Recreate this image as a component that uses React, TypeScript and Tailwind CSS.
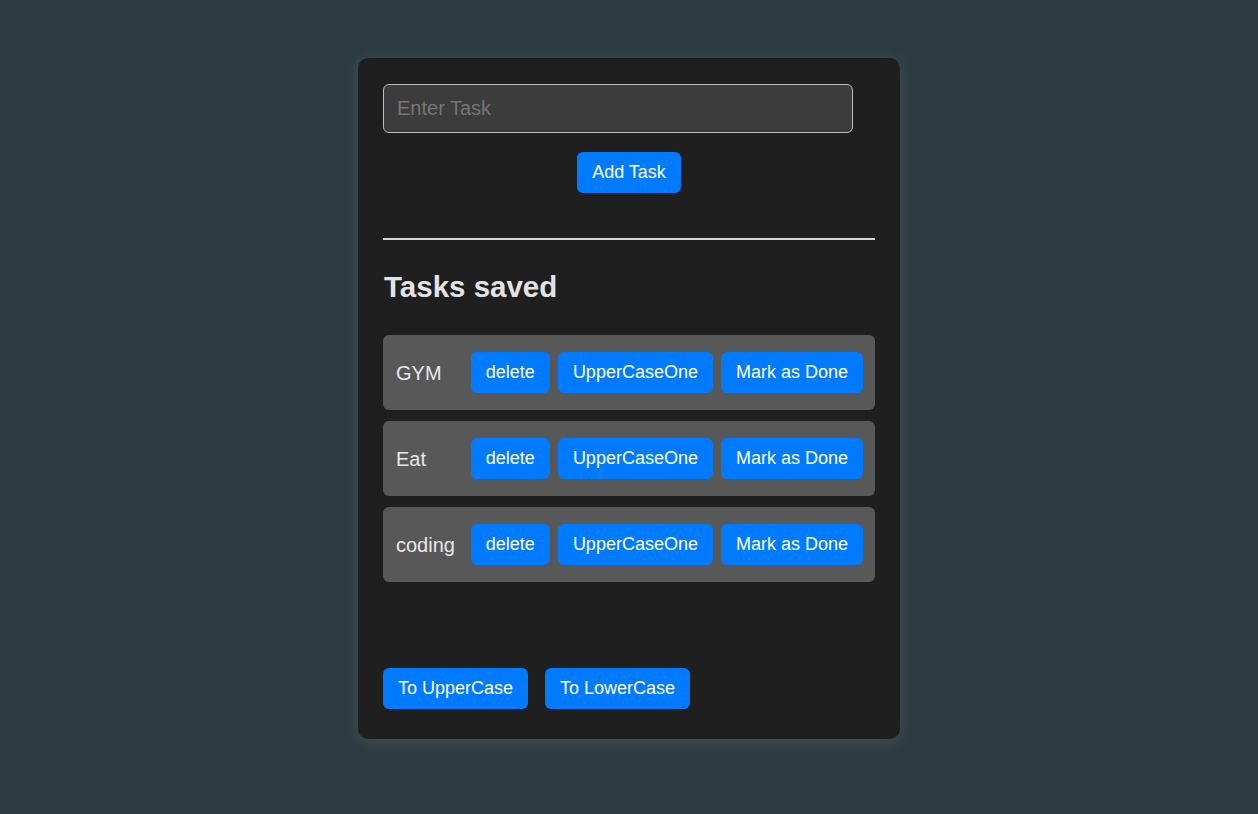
import React from 'react';

const tasks = ['GYM', 'Eat', 'coding'];

const btn =
  "bg-[#007bff] text-white rounded-[6px] h-[41px] px-[15px] pb-[2px] text-[18px] leading-none whitespace-nowrap";

export default function App() {
  const [items] = React.useState<string[]>(tasks);

  return (
    <div className="min-h-screen bg-[#2d3c42] flex justify-center pt-[58px] font-['Liberation_Sans',Arial,sans-serif]">
      <div className="w-[542px] h-[681px] bg-[#201f20] rounded-[10px] px-[25px] pt-[26px] shadow-[0_2px_14px_rgba(160,190,180,0.18)]">
        <input
          placeholder="Enter Task"
          className="block w-[470px] h-[49px] bg-[#3c3c3c] border border-[#bdbdbd] rounded-[6px] px-[13px] text-[20px] text-white placeholder:text-[#767676] outline-none"
        />
        <button className={btn + " block mx-auto mt-[19px]"}>Add Task</button>

        <hr className="mt-[45px] border-0 h-[2px] bg-[#d6d6d6]" />

        <h2 className="mt-[31px] h-[32px] leading-[32px] text-[29.5px] font-bold text-[#e3e3e3] pl-[1px]">
          Tasks saved
        </h2>

        {/* saved tasks */}
        <div className="mt-[32px] flex flex-col gap-[11px]">
          {items.map((t) => (
            <div key={t} className="h-[75px] bg-[#585858] rounded-[6px] flex items-center pl-[13px] pr-[12px]">
              <span className="w-[75px] text-[20px] leading-[24px] text-[#e8e8e8]">{t}</span>
              <div className="flex gap-[8px]">
                <button className={btn}>delete</button>
                <button className={btn}>UpperCaseOne</button>
                <button className={btn}>Mark as Done</button>
              </div>
            </div>
          ))}
        </div>

        <div className="mt-[86px] flex gap-[17px]">
          <button className={btn}>To UpperCase</button>
          <button className={btn}>To LowerCase</button>
        </div>
      </div>
    </div>
  );
}
